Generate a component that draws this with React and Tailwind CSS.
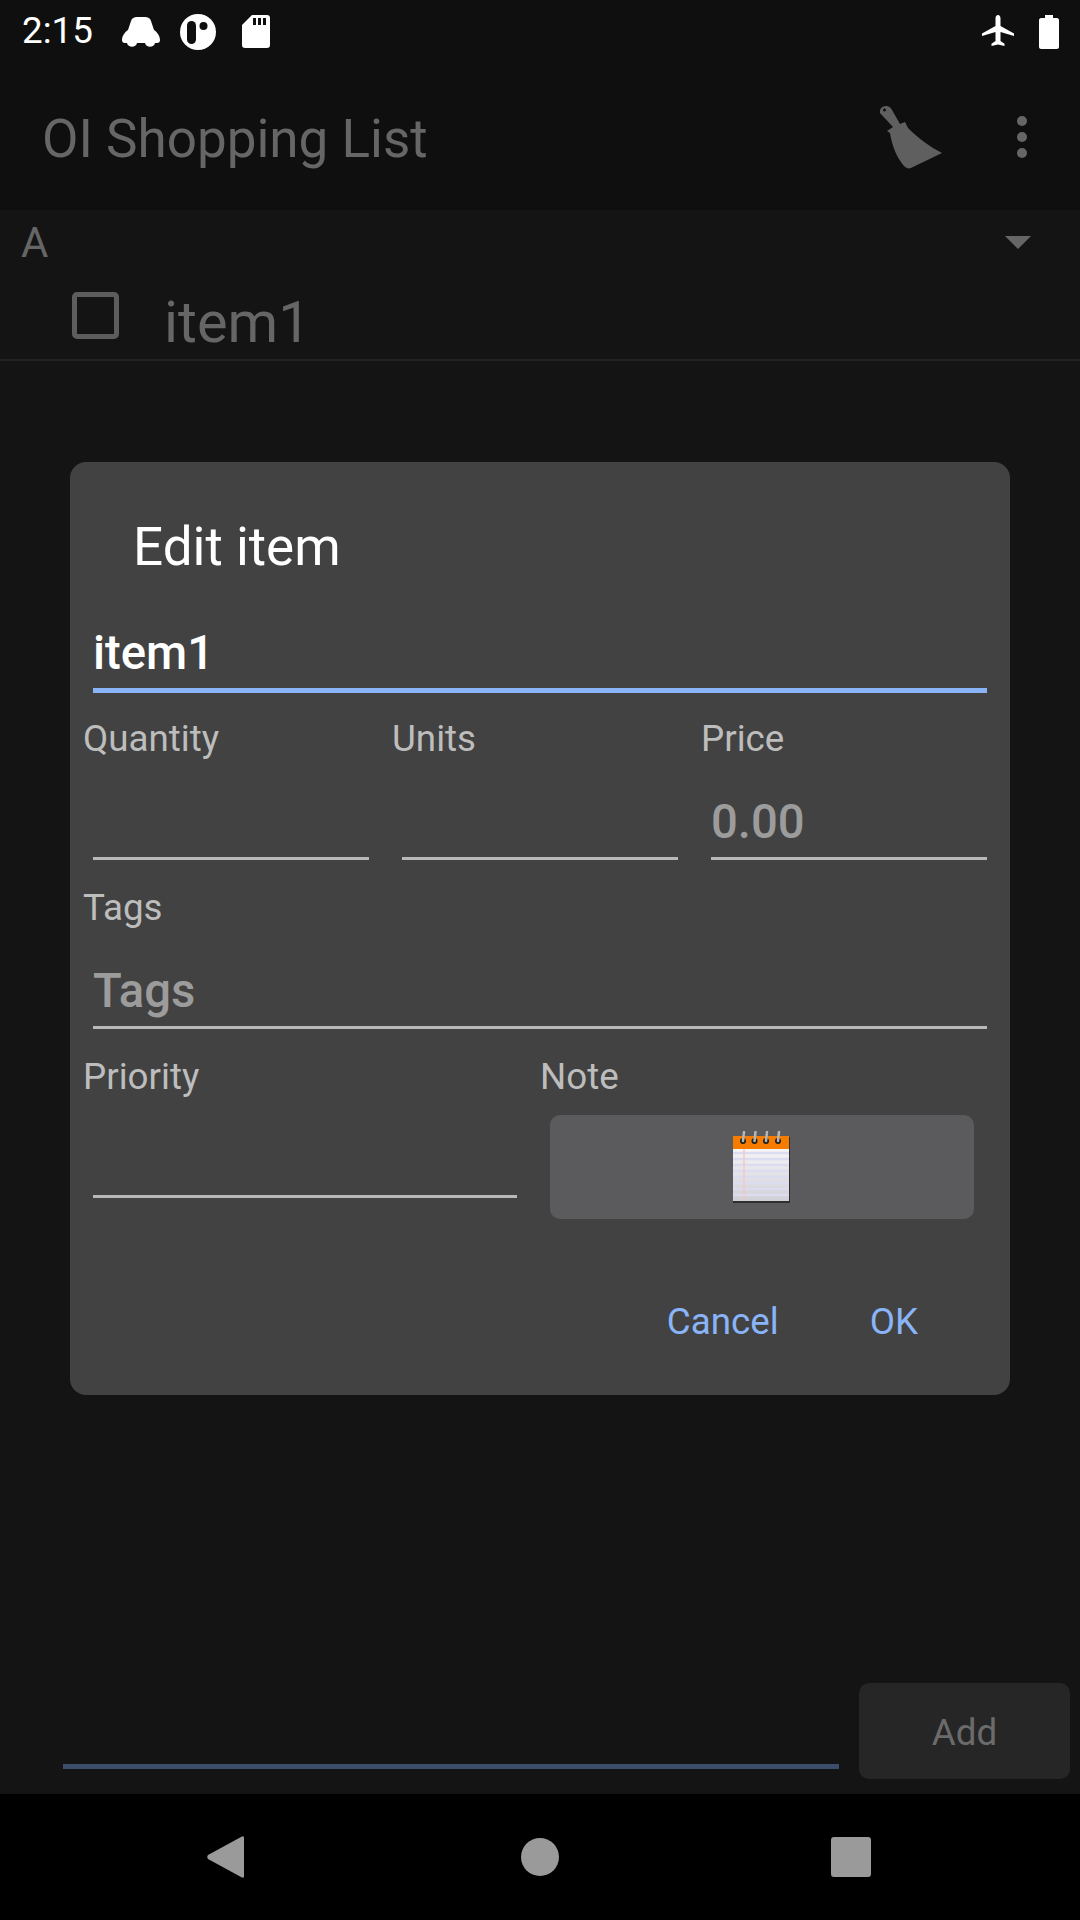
const Field = ({ label, value, width = "w-[276px]" }) => (
    <div className="flex flex-col h-[143px]">
        <div className="h-[44px] pl-[7px] text-[36.75px] leading-[44px] text-[#bdbdbd]">{label}</div>
        <div className={`ml-[17px] ${width} h-[99px] flex items-end pb-[11px] border-b-[3px] border-[#b8b8b8] text-[47.25px] leading-none font-medium text-[#9c9c9c]`}>
            {value}
        </div>
    </div>
);

const App = () => {
    return (
        <div className="relative w-[1080px] h-[1920px] flex flex-col bg-[#141414] overflow-hidden font-['Roboto',sans-serif]">
            {/* status bar */}
            <div className="h-[63px] bg-[#0f0f0f] flex items-center pl-[22px] pr-[21px]">
                <span className="text-[36.75px] leading-none text-white">2:15</span>
                <svg className="ml-[29px]" width="38" height="30" viewBox="0 0 38 30">
                    <path fill="#fff" d="M15 0h8c3 0 5 1 6 4l3 9c3 2 6 6 6 10 0 2-1 3-3 3h-2c-1 5-9 5-10 0H15c-1 5-9 5-10 0H3c-2 0-3-1-3-3 0-4 3-8 6-10l3-9c1-3 3-4 6-4z" />
                </svg>
                <svg className="ml-[20px]" width="36" height="36" viewBox="0 0 36 36">
                    <circle cx="18" cy="18" r="18" fill="#fff" />
                    <rect x="7" y="7" width="9" height="23" rx="4.500" fill="#0f0f0f" />
                    <circle cx="23.500" cy="12" r="4" fill="#0f0f0f" />
                </svg>
                <svg className="ml-[26px]" width="28" height="33" viewBox="0 0 28 33">
                    <path fill="#fff" d="M10 0h15c2 0 3 1 3 3v27c0 2-1 3-3 3H3c-2 0-3-1-3-3V10z" />
                    <path fill="#0f0f0f" d="M11 3h3v7h-3zM16 3h3v7h-3zM21 3h3v7h-3z" />
                </svg>
                <svg className="ml-auto" width="32" height="33" viewBox="0 0 32 33">
                    <path fill="#fff" d="M16 0c1.500 0 2.500 1.500 2.500 3.500V11L32 18.500v2.500l-13.500-4v9l4 2.700V31L16 29.500 9.500 31v-2.300l4-2.700v-9L0 21v-2.500L13.500 11V3.500C13.500 1.500 14.500 0 16 0z" />
                </svg>
                <svg className="ml-[25px]" width="20" height="34" viewBox="0 0 20 34">
                    <path fill="#fff" d="M6 0h8v3h4c1 0 2 1 2 2v27c0 1-1 2-2 2H2c-1 0-2-1-2-2V5c0-1 1-2 2-2h4z" />
                </svg>
            </div>

            {/* app bar */}
            <div className="h-[147px] bg-[#0f0f0f] flex items-center pl-[42px] pr-[53px]">
                <span className="text-[53px] leading-none text-[#666666] mt-[5px]">OI Shopping List</span>
                <svg className="ml-auto mr-[75px] mt-[1px]" width="62" height="63" viewBox="0 0 62 63">
                    <path fill="#5f5f5f" fillRule="evenodd" d="M0 7C-1 2 3 0 6 0c3 0 5 2 6 4l8 14 5-2 3 6c10 10 22 19 34 25L33 61c-3 2-6 2-9-1-7-8-12-20-14-33l-3-2 6-4z M4.500 2.500a1.500 1.500 0 1 0 .01 0z" />
                </svg>
                <div className="flex flex-col gap-[6px] w-[10px]">
                    <div className="w-[10px] h-[10px] rounded-full bg-[#666666]"></div>
                    <div className="w-[10px] h-[10px] rounded-full bg-[#666666]"></div>
                    <div className="w-[10px] h-[10px] rounded-full bg-[#666666]"></div>
                </div>
            </div>

            {/* list */}
            <div className="flex-1 flex flex-col">
                <div className="h-[68px] flex items-center justify-between pl-[21px] pr-[49px]">
                    <span className="text-[42px] leading-none text-[#666666] -mt-[2px]">A</span>
                    <div className="w-0 h-0 border-x-[13.5px] border-x-transparent border-t-[13px] border-t-[#666666] -mt-[3px]"></div>
                </div>
                <div className="h-[83px] flex items-center pl-[72px] border-b-[2px] border-[#232323]">
                    <div className="w-[47px] h-[47px] rounded-[5px] border-[5px] border-[#5d5d5d] -mt-[6px]"></div>
                    <span className="ml-[45px] text-[57.75px] leading-none text-[#666666] mt-[8px]">item1</span>
                </div>
            </div>

            {/* add bar */}
            <div className="h-[124px] flex pl-[63px] pr-[10px] pb-[15px] items-end">
                <div className="w-[776px] h-[5px] bg-[#3b4d6b] mb-[10px]"></div>
                <div className="ml-[20px] w-[211px] h-[96px] rounded-[10px] bg-[#262626] flex items-center justify-center pt-1 text-[36.75px] text-[#6b6b6b]">Add</div>
            </div>

            {/* nav bar */}
            <div className="h-[126px] bg-black flex items-center pl-[207px]">
                <svg width="37" height="42" viewBox="0 0 37 42">
                    <path fill="#9a9a9a" d="M37 2v38c0 2-1 2-3 1L1 23c-1-1-1-3 0-4L34 1c2-1 3-1 3 1z" />
                </svg>
                <div className="ml-[277px] w-[38px] h-[38px] rounded-full bg-[#9a9a9a]"></div>
                <div className="ml-[272px] w-[40px] h-[40px] rounded-[3px] bg-[#9a9a9a]"></div>
            </div>

            {/* edit dialog */}
            <div className="absolute left-[70px] top-[462px] w-[940px] h-[933px] rounded-[16px] bg-[#424242] flex flex-col">
                <div className="h-[126px] pl-[63px] pt-[57px] text-[53px] leading-[56px] text-white">Edit item</div>
                <div className="h-[105px] mx-[23px] border-b-[5px] border-[#8ab4f8] flex items-end pb-[11px] text-[47.25px] leading-none font-medium text-white">item1</div>
                <div className="ml-[6px] mt-[24px] grid grid-cols-[309px_309px_309px]">
                    <Field label="Quantity" />
                    <Field label="Units" />
                    <Field label="Price" value="0.00" />
                </div>
                <div className="ml-[6px] mt-[26px]">
                    <Field label="Tags" value="Tags" width="w-[894px]" />
                </div>
                <div className="ml-[6px] mt-[26px] grid grid-cols-[457px_457px]">
                    <Field label="Priority" width="w-[424px]" />
                    <div className="flex flex-col">
                        <div className="h-[44px] pl-[7px] text-[36.75px] leading-[44px] text-[#bdbdbd]">Note</div>
                        <div className="ml-[17px] mt-[16px] w-[424px] h-[104px] rounded-[10px] bg-[#5b5b5d] flex items-center justify-center">
                            <svg width="60" height="72" viewBox="0 0 60 72">
                                <defs>
                                    <linearGradient id="paper" x1="0" y1="0" x2="0" y2="1">
                                        <stop offset="0" stopColor="#ffffff" />
                                        <stop offset="1" stopColor="#cfcfd6" />
                                    </linearGradient>
                                </defs>
                                <rect x="1" y="6" width="57" height="66" fill="#2f2f2f" />
                                <rect x="1" y="5" width="56" height="65" fill="url(#paper)" />
                                <path d="M1 22h56M1 28h56M1 34h56M1 40h56M1 46h56M1 52h56M1 58h56M1 64h56" stroke="#dcdcf0" strokeWidth="2.500" />
                                <path d="M12 18v52" stroke="#f7c6c6" strokeWidth="1.500" />
                                <rect x="1" y="5" width="56" height="13" fill="#f57c00" />
                                <g fill="#1f1f1f">
                                    <circle cx="11" cy="10" r="3" />
                                    <circle cx="22.500" cy="10" r="3" />
                                    <circle cx="34" cy="10" r="3" />
                                    <circle cx="46" cy="10" r="3" />
                                </g>
                                <path d="M11 10l1-9M22.500 10l1-9M34 10l1-9M46 10l1-9" stroke="#b5b5b5" strokeWidth="2.500" strokeLinecap="round" />
                            </svg>
                        </div>
                    </div>
                </div>
                <div className="flex justify-end items-center pr-[92px] mt-[85px] text-[36.75px] leading-none text-[#8ab4f8]">
                    <span>Cancel</span>
                    <span className="ml-[91px]">OK</span>
                </div>
            </div>
        </div>
    );
};

export default App;
